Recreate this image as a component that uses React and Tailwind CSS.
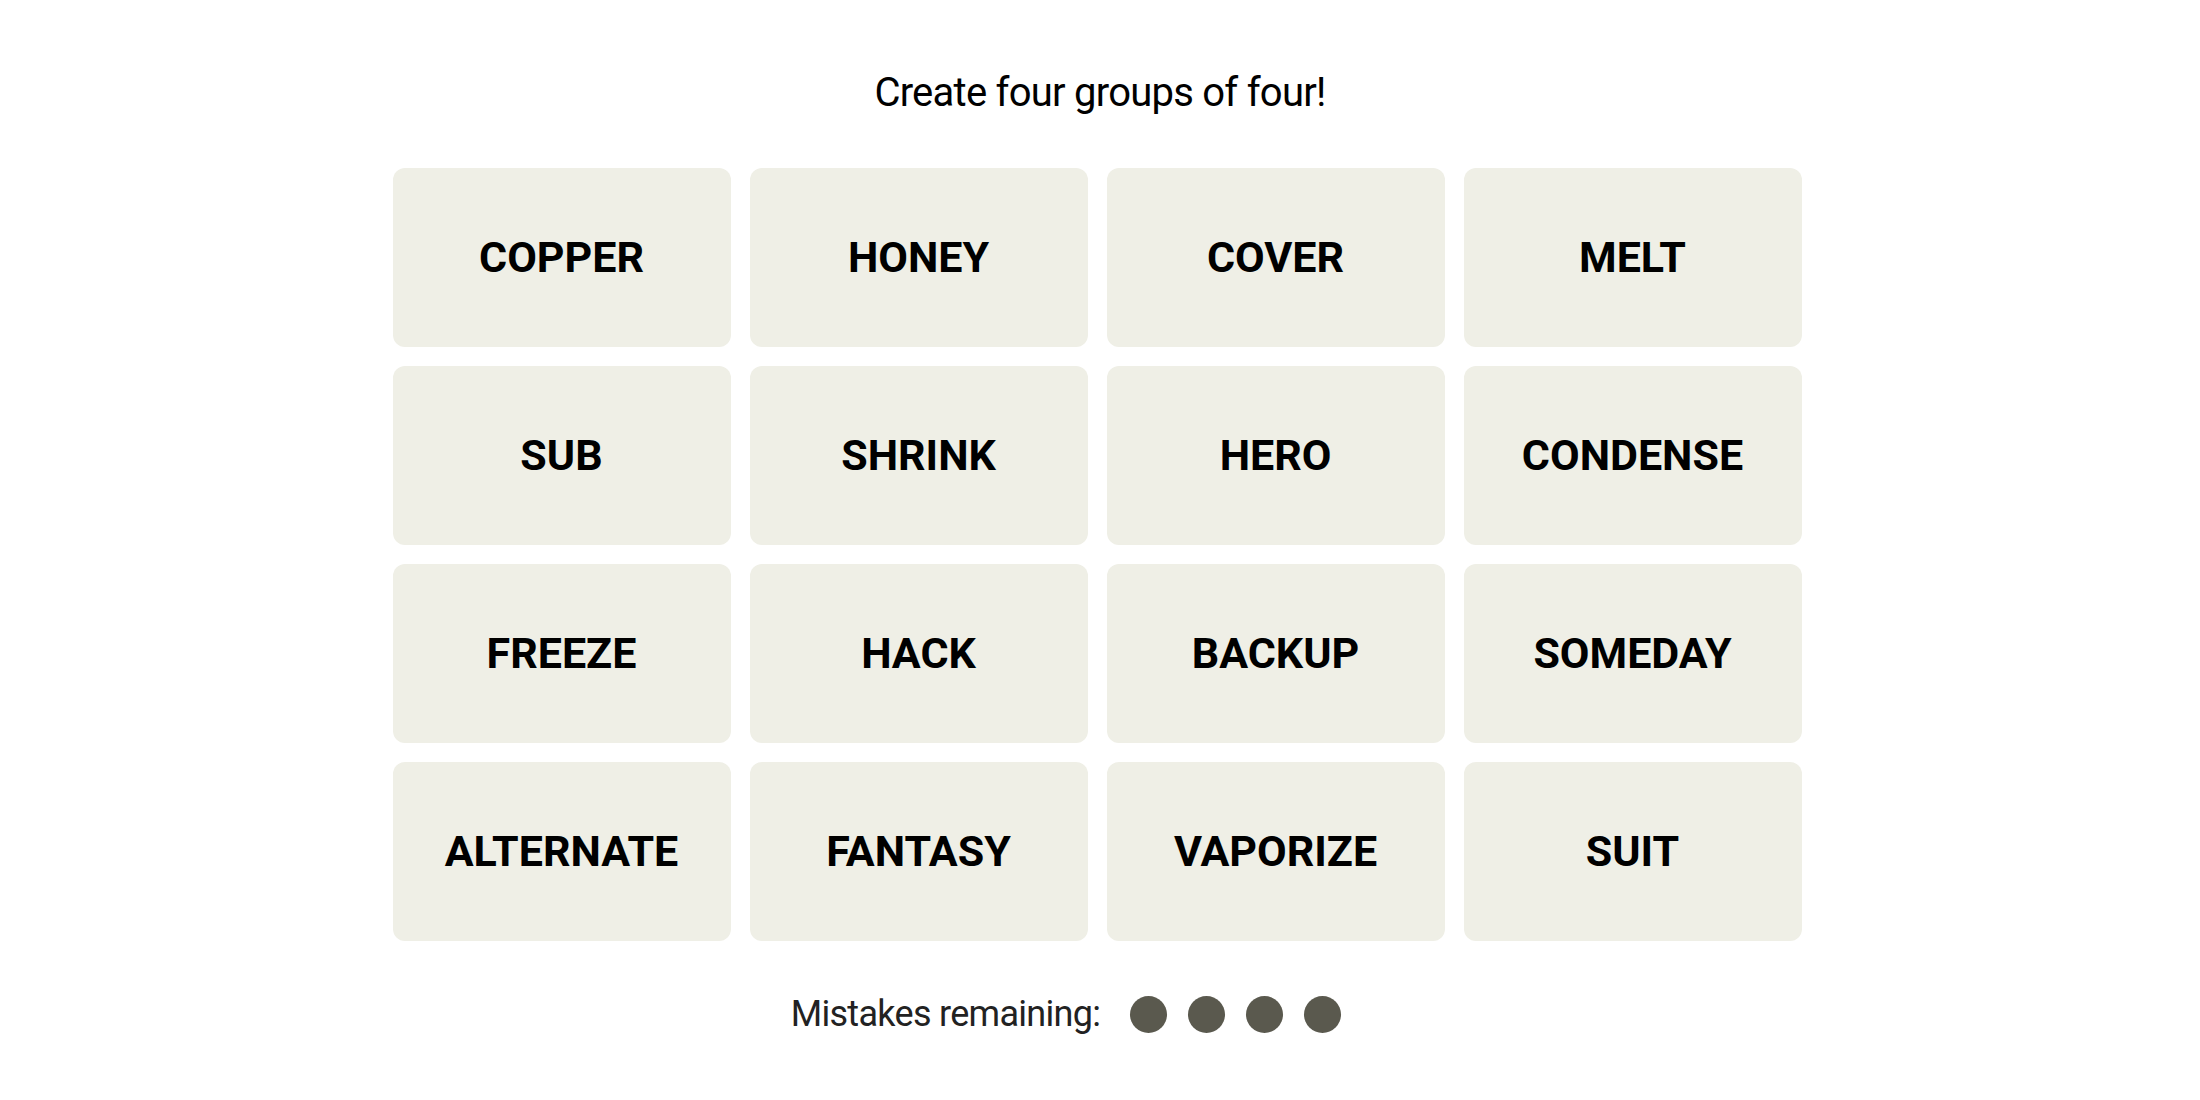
import React from "react";

const words = [
  "COPPER", "HONEY", "COVER", "MELT",
  "SUB", "SHRINK", "HERO", "CONDENSE",
  "FREEZE", "HACK", "BACKUP", "SOMEDAY",
  "ALTERNATE", "FANTASY", "VAPORIZE", "SUIT",
];

export default function App() {
  return (
    <div className="w-[2200px] h-[1100px] bg-white flex flex-col items-center pt-[68px]">
      <div className="h-[50px] flex items-center text-[40px] text-black font-normal [font-family:Roboto,'Liberation_Sans',sans-serif] tracking-[-0.75px]">
        Create four groups of four!
      </div>
      <div className="mt-[50px] mr-[6px] grid grid-cols-[repeat(4,338px)] auto-rows-[179px] gap-[19px]">
        {words.map((w) => (
          <div
            key={w}
            className="bg-[#efefe6] rounded-[12px] flex items-center justify-center text-[43px] font-bold text-black [font-family:Roboto,'Liberation_Sans',sans-serif]"
          >
            {w}
          </div>
        ))}
      </div>
      <div className="mt-[55px] mr-[68px] h-[36px] flex items-center">
        <span className="text-[36px] text-[#222] [font-family:Roboto,'Liberation_Sans',sans-serif] tracking-[-0.7px]">
          Mistakes remaining:
        </span>
        <div className="ml-[30px] flex gap-[21px]">
          <span className="w-[37px] h-[37px] rounded-full bg-[#5a594e]" />
          <span className="w-[37px] h-[37px] rounded-full bg-[#5a594e]" />
          <span className="w-[37px] h-[37px] rounded-full bg-[#5a594e]" />
          <span className="w-[37px] h-[37px] rounded-full bg-[#5a594e]" />
        </div>
      </div>
    </div>
  );
}
